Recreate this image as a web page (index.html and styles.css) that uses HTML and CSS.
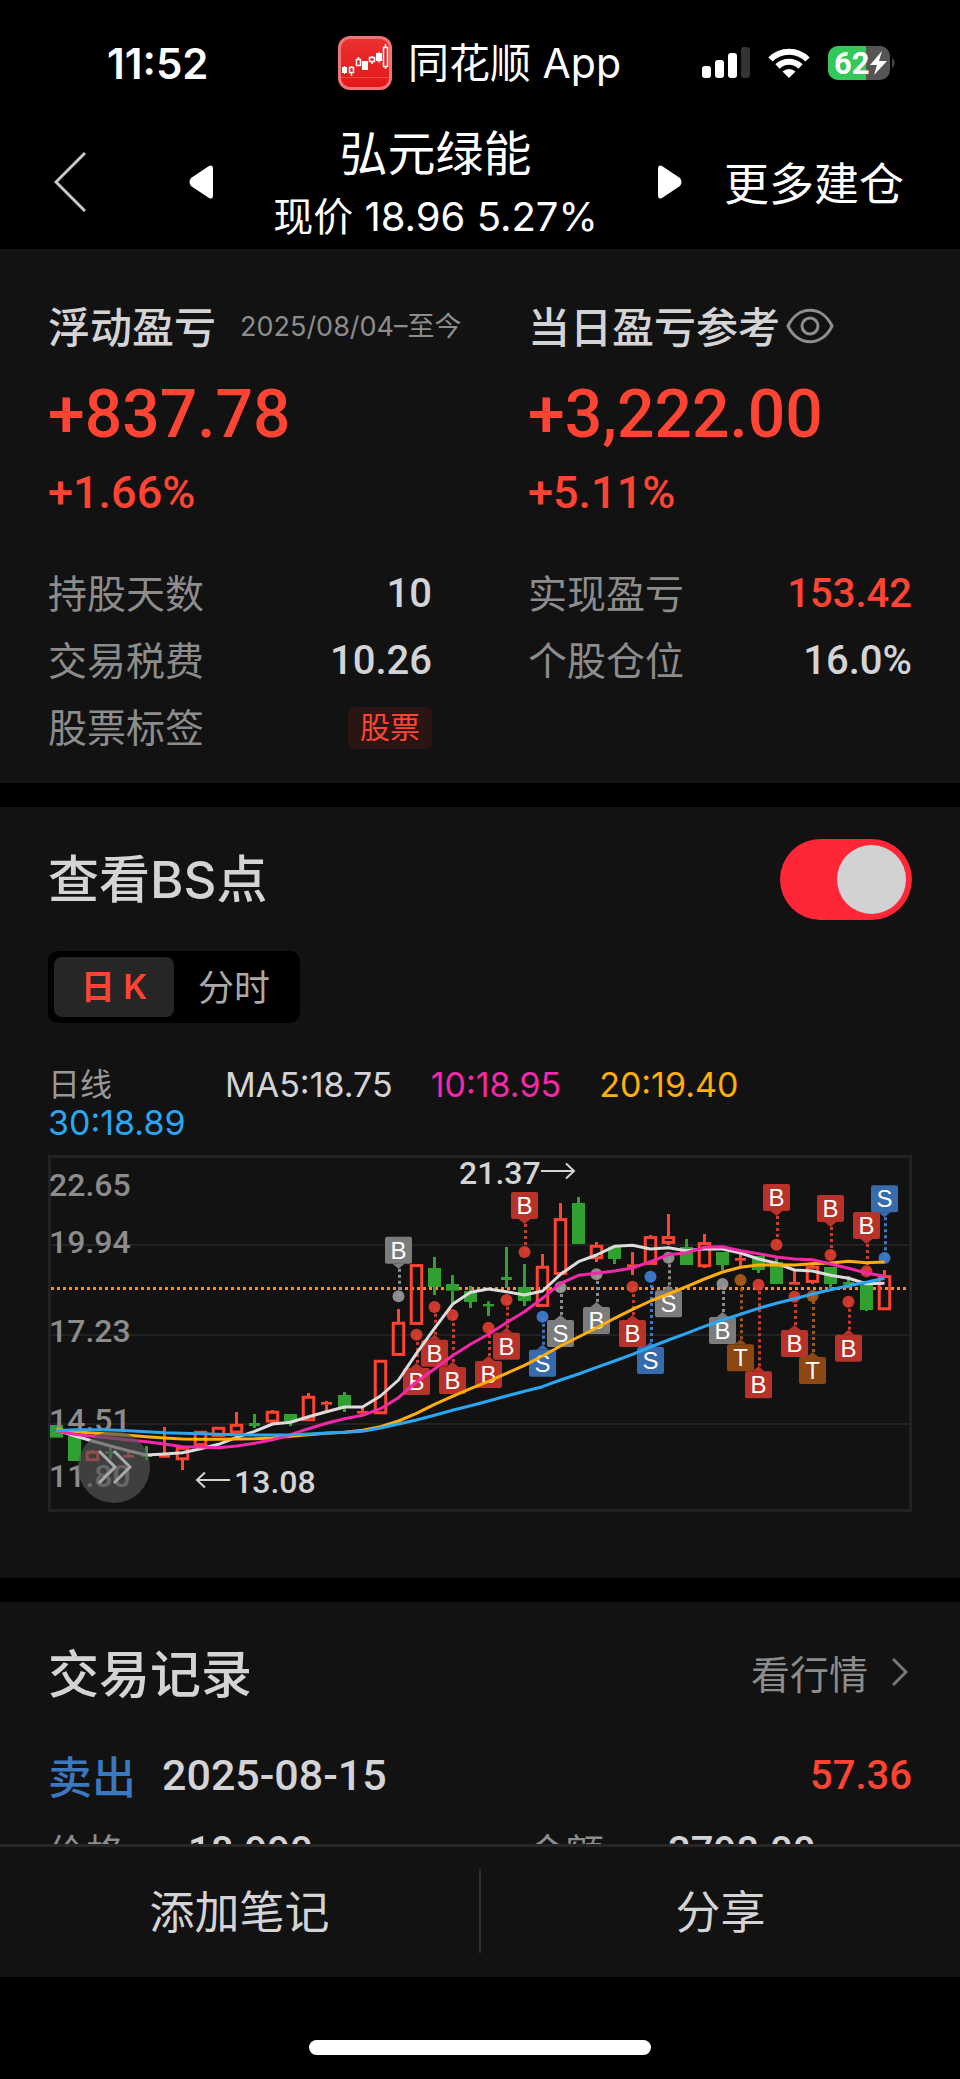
FILE: index.html
```
<!DOCTYPE html>
<html lang="zh-CN">

<head>
    <meta charset="UTF-8">
    <meta name="viewport" content="width=device-width, initial-scale=1.0">
    <title>弘元绿能 - 持仓详情</title>
    <link rel="stylesheet" href="styles.css">
</head>

<body>
    <div class="app">
        <!-- Status bar -->
        <div class="status-bar">
            <span class="status-time">11:52</span>
            <div class="status-app">
                <svg class="app-logo" width="54" height="54" viewBox="0 0 54 54" aria-hidden="true">
                    <defs>
                        <linearGradient id="logoFill" x1="0" y1="0" x2="0" y2="1">
                            <stop offset="0" stop-color="#ea3030" />
                            <stop offset="1" stop-color="#e21818" />
                        </linearGradient>
                    </defs>
                    <rect width="54" height="54" rx="12" fill="#f07474" />
                    <rect x="3" y="3" width="48" height="48" rx="9" fill="url(#logoFill)" />
                    <path d="M3 41.5h48" stroke="#f04a48" />
                    <g fill="#fff">
                        <path d="M4 31h5v6h-5zM24 25h6v9h-6zM38 17h6v8h-6zM6 30h1v8h-1zM40.500 16h1v11h-1z" />
                    </g>
                    <g fill="none" stroke="#fff">
                        <path d="M11.500 31.500h4v5h-4zM13.500 30v1M13.500 37v3M18.500 23.500h4v6h-4zM20.500 21v2M31.500 21.500h5v4h-5zM34 20v1M34 26v2" stroke-width="1.500" />
                        <path d="M45.500 11.500h4v19h-4zM47.500 8v3M47.500 31v2" stroke-width="1.500" />
                    </g>
                </svg>
                <span>同花顺 App</span>
            </div>
            <div class="status-icons">
                <svg width="48" height="32" viewBox="0 0 48 32" aria-hidden="true">
                    <g fill="#fff">
                        <rect x="0" y="19" width="9" height="12" rx="3" />
                        <rect x="13" y="13" width="9" height="18" rx="3" />
                        <rect x="26" y="6" width="9" height="25" rx="3" />
                    </g>
                    <rect x="39" y="0" width="9" height="31" rx="3" fill="#333" />
                </svg>
                <svg width="42" height="32" viewBox="0 0 42 32" aria-hidden="true">
                    <g fill="none" stroke="#fff" stroke-width="6">
                        <path d="M2.500 12.500a26 26 0 0 1 37 0" />
                        <path d="M9.500 19.500a16.500 16.500 0 0 1 23 0" />
                    </g>
                    <path d="M21 31l-6.500-6.500a9.500 9.500 0 0 1 13 0z" fill="#fff" />
                </svg>
                <svg width="67" height="34" viewBox="0 0 67 34" aria-hidden="true">
                    <defs>
                        <clipPath id="batteryShape">
                            <rect width="62" height="34" rx="10" />
                        </clipPath>
                    </defs>
                    <g clip-path="url(#batteryShape)">
                        <rect width="62" height="34" fill="#555" />
                        <rect width="38" height="34" fill="#34c759" />
                    </g>
                    <path d="M64 12a6 6 0 0 1 0 10z" fill="#444" />
                    <text x="6" y="28" class="battery-level">62</text>
                    <path d="M54 5L42 19h7l-3 10 13-14h-8z" fill="#fff" />
                </svg>
            </div>
        </div>

        <!-- Navigation -->
        <header class="nav-bar">
            <button type="button" class="icon-button nav-back" aria-label="返回">
                <svg width="32" height="60" viewBox="0 0 32 60">
                    <path d="M31 1L2 30l29 29" fill="none" stroke="#c8c8c8" stroke-width="3" />
                </svg>
            </button>
            <button type="button" class="icon-button" aria-label="上一只">
                <svg width="24" height="34" viewBox="0 0 24 34">
                    <path d="M20 1Q24-1 24 4V30Q24 35 20 33L2 21Q-1 17 2 13z" fill="#fff" />
                </svg>
            </button>
            <div class="nav-title">
                <h1>弘元绿能</h1>
                <p>现价 18.96 5.27%</p>
            </div>
            <button type="button" class="icon-button" aria-label="下一只">
                <svg width="24" height="34" viewBox="0 0 24 34">
                    <path d="M4 1Q0-1 0 4V30Q0 35 4 33L22 21Q25 17 22 13z" fill="#fff" />
                </svg>
            </button>
            <a href="#" class="nav-action">更多建仓</a>
        </header>

        <main class="content">
            <!-- Profit summary -->
            <section class="panel summary">
                <div class="summary-column">
                    <div class="summary-title">
                        <h2>浮动盈亏</h2>
                        <span class="summary-date">2025/08/04–至今</span>
                    </div>
                    <p class="summary-amount">+837.78</p>
                    <p class="summary-percent">+1.66%</p>
                    <dl class="details">
                        <div><dt>持股天数</dt><dd>10</dd></div>
                        <div><dt>交易税费</dt><dd>10.26</dd></div>
                        <div><dt>股票标签</dt><dd><span class="tag">股票</span></dd></div>
                    </dl>
                </div>
                <div class="summary-column">
                    <div class="summary-title">
                        <h2>当日盈亏参考</h2>
                        <button type="button" class="icon-button eye-button" aria-label="隐藏金额">
                            <svg width="48" height="36" viewBox="0 0 48 36" fill="none" stroke="#8e8e8e" stroke-width="3">
                                <path d="M2 18C12-3 36-3 46 18C36 39 12 39 2 18z" />
                                <circle cx="24" cy="18" r="8" />
                            </svg>
                        </button>
                    </div>
                    <p class="summary-amount">+3,222.00</p>
                    <p class="summary-percent">+5.11%</p>
                    <dl class="details">
                        <div><dt>实现盈亏</dt><dd class="up">153.42</dd></div>
                        <div><dt>个股仓位</dt><dd>16.0%</dd></div>
                    </dl>
                </div>
            </section>

            <!-- BS chart -->
            <section class="panel chart-panel">
                <div class="panel-header">
                    <h2 id="bsTitle">查看BS点</h2>
                    <input type="checkbox" class="switch" aria-labelledby="bsTitle" checked>
                </div>
                <div class="segment">
                    <button type="button" class="segment-item active">日 K</button>
                    <button type="button" class="segment-item">分时</button>
                </div>
                <div class="legend">
                    <span class="legend-name">日线</span>
                    <span class="ma5">MA5:18.75</span>
                    <span class="ma10">10:18.95</span>
                    <span class="ma20">20:19.40</span>
                    <span class="ma30">30:18.89</span>
                </div>
                <div class="chart">
                    <svg id="kline" viewBox="0 0 864 357" role="img" aria-label="日K线"></svg>
                    <button type="button" class="chart-expand" aria-label="展开">
                        <svg width="36" height="36" viewBox="0 0 36 36" fill="none" stroke="#aaa" stroke-width="3">
                            <path d="M3 2l16 16L3 34M18 2l16 16-16 16" />
                        </svg>
                    </button>
                </div>
            </section>

            <!-- Trade records -->
            <section class="panel records">
                <div class="panel-header">
                    <h2>交易记录</h2>
                    <a href="#" class="more-link">看行情
                        <svg width="16" height="28" viewBox="0 0 16 28">
                            <path d="M1 1l13 13L1 27" fill="none" stroke="#777" stroke-width="3" />
                        </svg>
                    </a>
                </div>
                <article class="record">
                    <div class="record-head">
                        <span class="record-side">卖出</span>
                        <time class="record-date" datetime="2025-08-15">2025-08-15</time>
                        <span class="record-profit">57.36</span>
                    </div>
                    <dl class="record-info">
                        <div><dt>价格</dt><dd>18.990</dd></div>
                        <div><dt>金额</dt><dd>3798.00</dd></div>
                    </dl>
                </article>
            </section>
        </main>

        <!-- Bottom actions -->
        <footer class="bottom-bar">
            <button type="button">添加笔记</button>
            <button type="button">分享</button>
        </footer>
        <div class="home-area">
            <div class="home-indicator"></div>
        </div>
    </div>

    <script>
        const STEP = 18;
        const FIRST_X = 8.5;
        const BODY_WIDTH = 13;
        const SVG_NS = 'http://www.w3.org/2000/svg';
        const kline = document.getElementById('kline');

        // [direction, high, low, body top, body bottom], in thirds of a pixel
        const candles = [
            ['down', 855, 893, 855, 893], ['down', 888, 963, 888, 963], ['up', 930, 963, 933, 963],
            ['down', 920, 956, 934, 941], ['up', 935, 953, 945, 953], ['down', 918, 960, 945, 951],
            ['up', 861, 953, 945, 953], ['up', 921, 990, 921, 960], ['up', 873, 918, 873, 918],
            ['up', 861, 890, 861, 890], ['up', 816, 880, 852, 880], ['down', 822, 864, 849, 858],
            ['up', 810, 852, 813, 847], ['down', 822, 858, 822, 843], ['up', 759, 843, 768, 843],
            ['up', 783, 813, 786, 794], ['down', 756, 816, 765, 802], ['up', 800, 821, 813, 821],
            ['up', 660, 822, 660, 822], ['up', 507, 647, 546, 647], ['up', 373, 554, 373, 554],
            ['down', 351, 465, 384, 441], ['down', 405, 489, 432, 452], ['down', 438, 504, 453, 486],
            ['down', 484, 528, 492, 499], ['down', 321, 444, 411, 420], ['down', 372, 498, 441, 483],
            ['up', 342, 500, 378, 500], ['up', 189, 404, 235, 404], ['down', 171, 312, 189, 312],
            ['up', 306, 366, 315, 357], ['down', 320, 372, 320, 357], ['up', 336, 405, 373, 381],
            ['up', 285, 374, 289, 374], ['up', 222, 315, 289, 311], ['down', 297, 375, 321, 375],
            ['up', 282, 384, 307, 381], ['down', 336, 390, 336, 375], ['up', 342, 377, 354, 362],
            ['down', 348, 399, 348, 390], ['down', 354, 432, 366, 432], ['up', 393, 434, 426, 434],
            ['up', 366, 432, 378, 428], ['down', 381, 445, 381, 432], ['down', 408, 445, 426, 434],
            ['down', 435, 513, 435, 510], ['up', 390, 510, 406, 510]
        ];

        const averages = {
            ma5: [870, 887, 903, 918, 932, 945, 942, 938, 926, 913, 892, 874, 852, 847, 830, 815, 801, 801, 768, 720, 640, 565, 493, 457, 447, 455, 465, 453, 403, 365, 345, 319, 316, 327, 323, 332, 326, 327, 339, 357, 370, 390, 393, 406, 415, 431, 430],
            ma20: [868, 875, 879, 882, 886, 890, 894, 897, 898, 898, 897, 896, 894, 889, 884, 880, 877, 871, 860, 843, 820, 793, 769, 746, 724, 700, 676, 648, 618, 591, 564, 535, 508, 483, 462, 440, 417, 396, 382, 375, 374, 375, 371, 369, 364, 368, 366],
            ma10: [872, 883, 889, 894, 900, 905, 912, 920, 921, 923, 918, 910, 899, 884, 866, 850, 836, 826, 806, 773, 726, 687, 647, 613, 583, 548, 515, 475, 430, 406, 400, 393, 384, 365, 344, 338, 322, 320, 332, 341, 351, 357, 359, 372, 385, 399, 409],
            ma30: [872, 869, 869, 870, 872, 875, 878, 880, 881, 883, 884, 885, 885, 884, 882, 879, 877, 874, 864, 852, 840, 826, 811, 797, 783, 768, 754, 740, 720, 702, 682, 663, 643, 621, 600, 580, 559, 540, 523, 505, 490, 476, 462, 449, 437, 427, 415]
        };

        // [candle index, letter, color, dot y, box top]
        const markers = [
            [19, 'B', 'gray', 469, 290], [20, 'B', 'red', 584, 684], [21, 'B', 'red', 501, 599],
            [22, 'B', 'red', 525, 681], [24, 'B', 'red', 563, 663], [25, 'B', 'red', 480, 578],
            [26, 'B', 'red', 336, 156], [27, 'S', 'blue', 530, 629], [28, 'S', 'gray', 442, 540],
            [30, 'B', 'gray', 403, 501], [32, 'B', 'red', 440, 540], [33, 'S', 'blue', 410, 621],
            [34, 'S', 'gray', 353, 451], [37, 'B', 'gray', 432, 531], [38, 'T', 'brown', 420, 613],
            [39, 'B', 'red', 434, 694], [40, 'B', 'red', 314, 132], [41, 'B', 'red', 470, 570],
            [42, 'T', 'brown', 468, 651], [43, 'B', 'red', 345, 165], [44, 'B', 'red', 485, 584],
            [45, 'B', 'red', 394, 216], [46, 'S', 'blue', 354, 136]
        ];

        const toX = (index) => FIRST_X + index * STEP;
        const toY = (value) => value / 3 - 15;

        function add(tag, attrs, text) {
            const node = document.createElementNS(SVG_NS, tag);
            for (const key in attrs) {
                node.setAttribute(key, attrs[key]);
            }
            if (text) {
                node.textContent = text;
            }
            kline.appendChild(node);
        }

        // Frame and grid
        add('rect', { x: 1.5, y: 1.5, width: 861, height: 354, class: 'frame' });
        [90, 180, 269].forEach((y) => add('path', { d: `M0 ${y}H864`, class: 'grid' }));
        add('path', { d: 'M3 133.5H860', class: 'cost-line' });

        candles.forEach(([dir, high, low, top, bottom], i) => {
            const x = toX(i);
            const h = toY(bottom) - toY(top);
            add('path', { d: `M${x} ${toY(high)}V${toY(top)}M${x} ${toY(bottom)}V${toY(low)}`, class: `wick ${dir}` });
            if (dir === 'up' && h > 5) {
                add('rect', { x: x - 5.25, y: toY(top) + 1.25, width: 10.5, height: h - 2.5, class: 'body-up' });
            } else {
                const flat = h <= 3 ? 5.5 : BODY_WIDTH / 2;
                add('rect', { x: x - flat, y: toY(top), width: flat * 2, height: h, class: `body-flat ${dir}` });
            }
        });

        markers.forEach(([i, letter, color, dot, box]) => {
            const x = toX(i);
            const dotY = toY(dot);
            const boxY = toY(box);
            const above = boxY < dotY;
            const edge = above ? boxY + 27 : boxY;
            const tip = above ? edge + 5 : edge - 5;
            add('path', { d: `M${x + 1} ${tip}V${dotY}`, class: `stem ${color}` });
            add('circle', { cx: x, cy: dotY, r: 6, class: `dot ${color}` });
            add('path', { d: `M${x - 6} ${edge}L${x} ${tip}L${x + 6} ${edge}z`, class: `flag ${color}` });
            add('rect', { x: x - 13.5, y: boxY, width: 27, height: 27, rx: 2, class: `flag ${color}` });
            add('text', { x: x, y: boxY + 22, class: 'flag-text' }, letter);
        });

        // Price scale
        [['22.65', 168], ['19.94', 340], ['17.23', 606], ['14.51', 874], ['11.80', 1041]].forEach(([price, y]) => {
            add('text', { x: 1, y: toY(y), class: 'scale' }, price);
        });

        for (const name in averages) {
            const points = averages[name].map((y, i) => `${toX(i)},${toY(y).toFixed(1)}`).join(' ');
            add('polyline', { points: points, class: `average ${name}` });
        }

        // Highest and lowest price
        add('text', { x: 411, y: 29, class: 'extreme' }, '21.37');
        add('path', { d: 'M493 16H526M518 8.5L526 16L518 23.5', class: 'arrow' });
        add('text', { x: 186, y: 338, class: 'extreme' }, '13.08');
        add('path', { d: 'M182 325H149M157 317.5L149 325L157 332.5', class: 'arrow' });
    </script>
</body>

</html>
```
FILE: styles.css
```
:root {
    --page: #000;
    --panel: #121212;
    --text-primary: #d4d4d6;
    --text-secondary: #8c8c8c;
    --up: #ff4433;
    --down: #30a030;
    --sell: #3a78c0;
    --line: #222;
    --font-text: Inter, "Noto Sans CJK SC", sans-serif;
    --font-number: Roboto, "Noto Sans CJK SC", sans-serif;
}

* {
    box-sizing: border-box;
}

body {
    margin: 0;
    background: var(--page);
    color: var(--text-primary);
    font-family: var(--font-text);
}

h1,
h2,
p,
dl,
dd {
    margin: 0;
    font-weight: 400;
}

button {
    border: none;
    padding: 0;
    background: none;
    color: inherit;
    font: inherit;
    cursor: pointer;
}

a {
    color: inherit;
    text-decoration: none;
}

svg {
    display: block;
    flex: none;
}

.app {
    display: flex;
    flex-direction: column;
    height: 100vh;
}

/* Status bar */
.status-bar {
    display: flex;
    align-items: center;
    height: 120px;
    padding: 6px 65px 0 107px;
    color: #fff;
}

.status-time {
    width: 231px;
    font-size: 42px;
    font-weight: 600;
}

.status-app {
    display: flex;
    align-items: center;
    gap: 16px;
    font-size: 41px;
    line-height: 54px;
}

.status-icons {
    display: flex;
    align-items: center;
    gap: 18px;
    margin-left: auto;
}

.battery-level {
    fill: #fff;
    font: 700 31px var(--font-number);
}

/* Navigation */
.nav-bar {
    display: flex;
    align-items: center;
    height: 129px;
    padding: 0 56px 6px 54px;
    color: #fff;
}

.nav-back {
    margin-right: 103px;
}

.nav-title {
    flex: 1;
    padding-top: 6px;
    text-align: center;
    line-height: 63px;
    white-space: nowrap;
}

.nav-title h1 {
    font-size: 48px;
}

.nav-title p {
    font-size: 40px;
}

.nav-action {
    margin-left: 42px;
    font-size: 45px;
}

/* Content */
.content {
    display: flex;
    flex: 1;
    flex-direction: column;
    gap: 24px;
    min-height: 0;
    overflow-y: auto;
    scrollbar-width: none;
}

.panel {
    flex: none;
    padding: 0 48px;
    background: var(--panel);
}

.panel h2 {
    font-weight: 500;
}

.summary {
    display: grid;
    grid-template-columns: repeat(2, minmax(0, 1fr));
    gap: 96px;
    padding-top: 45px;
    padding-bottom: 22px;
}

.summary-title {
    display: flex;
    align-items: center;
    height: 60px;
    white-space: nowrap;
}

.summary-title h2 {
    font-size: 42px;
}

.summary-date {
    margin-left: 24px;
    color: var(--text-secondary);
    font-size: 27px;
}

.eye-button {
    padding: 4px 0 0 6px;
}

.summary-amount {
    color: var(--up);
    font: 500 66px/122px var(--font-number);
}

.summary-percent {
    color: var(--up);
    font: 500 45px/34px var(--font-number);
}

.details {
    margin-top: 50px;
    line-height: 67px;
}

.details div {
    display: flex;
    justify-content: space-between;
    height: 67px;
}

.details dt {
    color: var(--text-secondary);
    font-size: 39px;
}

.details dd {
    display: flex;
    align-items: center;
    font-family: var(--font-number);
    font-size: 40px;
    font-weight: 500;
}

.details .up {
    color: var(--up);
}

.tag {
    padding: 0 12px;
    border-radius: 6px;
    background: #2a1513;
    color: var(--up);
    font-size: 30px;
    font-weight: 400;
    line-height: 42px;
}

/* Chart */
.chart-panel {
    padding-top: 32px;
    padding-bottom: 66px;
}

.panel-header {
    display: flex;
    align-items: center;
    justify-content: space-between;
    height: 81px;
}

.panel-header h2 {
    font-size: 51px;
    line-height: 60px;
}

.switch {
    position: relative;
    width: 132px;
    height: 81px;
    margin: 0;
    border-radius: 41px;
    background: #444;
    appearance: none;
    cursor: pointer;
}

.switch::after {
    content: "";
    position: absolute;
    top: 6px;
    left: 6px;
    width: 69px;
    height: 69px;
    border-radius: 50%;
    background: #d2d2d4;
}

.switch:checked {
    background: #ff2638;
}

.switch:checked::after {
    right: 6px;
    left: auto;
}

.segment {
    display: flex;
    width: fit-content;
    margin-top: 31px;
    padding: 6px;
    border-radius: 10px;
    background: #000;
}

.segment-item {
    width: 120px;
    height: 60px;
    padding-bottom: 5px;
    border-radius: 8px;
    color: #aaa;
    font-size: 36px;
}

.segment-item.active {
    background: #262626;
    color: var(--up);
    font-size: 34px;
    font-weight: 600;
}

.legend {
    display: flex;
    flex-wrap: wrap;
    column-gap: 38px;
    margin: 43px 80px 13px 0;
    font-size: 34px;
    line-height: 38px;
}

.legend-name {
    width: 139px;
    color: #999;
    font-size: 32px;
}

.legend .ma5 {
    color: #d4d4d6;
}

.legend .ma10 {
    color: #f428a8;
}

.legend .ma20 {
    color: #ffae0c;
}

.legend .ma30 {
    color: #2aa7f2;
}

.chart {
    position: relative;
}

.chart > svg {
    width: 100%;
    height: auto;
}

.chart-expand {
    position: absolute;
    bottom: 9px;
    left: 30px;
    display: flex;
    align-items: center;
    justify-content: center;
    width: 72px;
    height: 72px;
    border-radius: 50%;
    background: rgba(86, 86, 86, 0.68);
}

.frame {
    fill: none;
    stroke: var(--line);
    stroke-width: 3;
}

.grid {
    stroke: var(--line);
    stroke-width: 2;
}

.cost-line {
    stroke: #ff8a1c;
    stroke-width: 3;
    stroke-dasharray: 3 3;
}

.wick {
    stroke-width: 3;
}

.wick.up {
    stroke: var(--up);
}

.wick.down {
    stroke: var(--down);
}

.body-up {
    fill: none;
    stroke: var(--up);
    stroke-width: 3;
}

.body-flat.up {
    fill: var(--up);
}

.body-flat.down {
    fill: var(--down);
}

.average {
    fill: none;
    stroke-width: 3;
    stroke-linejoin: round;
}

.average.ma5 {
    stroke: #dcdcdc;
}

.average.ma10 {
    stroke: #f428a8;
}

.average.ma20 {
    stroke: #ffae0c;
}

.average.ma30 {
    stroke: #2aa7f2;
}

.stem {
    stroke-width: 3;
    stroke-dasharray: 3 3;
}

.stem.red {
    stroke: #cc3a2e;
}

.stem.blue {
    stroke: #3a78c8;
}

.stem.gray {
    stroke: #8c8c8c;
}

.stem.brown {
    stroke: #a05416;
}

.dot {
    opacity: 0.9;
}

.dot.red {
    fill: #e03e30;
}

.dot.blue {
    fill: #4080d4;
}

.dot.gray {
    fill: #9a9a9a;
}

.dot.brown {
    fill: #b05c18;
}

.flag.red {
    fill: #b83229;
}

.flag.blue {
    fill: #366bae;
}

.flag.gray {
    fill: #7c7c7c;
}

.flag.brown {
    fill: #8c4713;
}

.flag-text {
    fill: #fff;
    font: 24px "Liberation Sans", sans-serif;
    text-anchor: middle;
}

.scale {
    fill: var(--text-secondary);
    font: 500 32px var(--font-number);
}

.extreme {
    fill: var(--text-primary);
    font: 500 32px var(--font-number);
}

.arrow {
    fill: none;
    stroke: var(--text-primary);
    stroke-width: 2;
}

/* Trade records */
.records {
    padding-top: 32px;
    padding-bottom: 48px;
}

.more-link {
    display: flex;
    align-items: center;
    gap: 24px;
    padding: 0 4px 5px 0;
    color: var(--text-secondary);
    font-size: 39px;
}

.record-head {
    display: flex;
    align-items: center;
    height: 66px;
    margin-top: 27px;
    font-family: var(--font-number);
    font-size: 40px;
    font-weight: 500;
}

.record-side {
    margin-right: 26px;
    color: var(--sell);
    font-size: 44px;
}

.record-date {
    font-size: 43px;
}

.record-profit {
    margin-left: auto;
    color: var(--up);
}

.record-info {
    display: grid;
    grid-template-columns: 1fr 1fr;
    column-gap: 96px;
    margin-top: 16px;
    line-height: 56px;
}

.record-info div {
    display: flex;
    align-items: center;
}

.record-info dt {
    width: 140px;
    color: var(--text-secondary);
    font-size: 38px;
}

.record-info dd {
    font-family: var(--font-number);
    font-size: 40px;
    font-weight: 500;
}

/* Bottom actions */
.bottom-bar {
    display: flex;
    flex: none;
    height: 133px;
    padding: 22px 0 24px;
    border-top: 3px solid #262626;
    background: var(--panel);
}

.bottom-bar button {
    flex: 1;
    padding-bottom: 4px;
    font-size: 45px;
}

.bottom-bar button + button {
    border-left: 2px solid #2e2e2e;
}

.home-area {
    display: flex;
    flex: none;
    align-items: flex-end;
    justify-content: center;
    height: 102px;
    padding-bottom: 24px;
}

.home-indicator {
    width: 342px;
    height: 15px;
    border-radius: 8px;
    background: #fff;
}
```
